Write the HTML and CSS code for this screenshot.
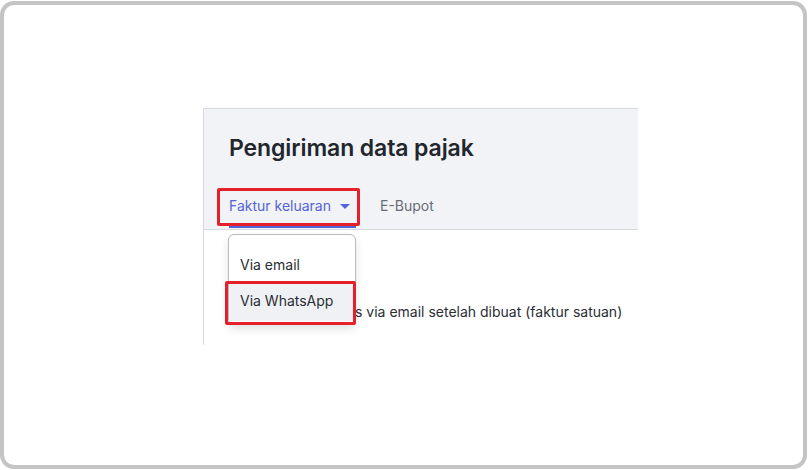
FILE: index.html
```html
<!DOCTYPE html>
<html>
<head>
<meta charset="utf-8">
<link rel="stylesheet" href="styles.css">
</head>
<body>
<div class="frame">
  <div class="panel">
    <div class="header">
      <h1 class="title">Pengiriman data pajak</h1>
      <div class="tabs">
        <div class="tab active">Faktur keluaran <span class="caret"></span></div>
        <div class="tab">E-Bupot</div>
      </div>
    </div>
    <div class="body">
      <p class="desc">Kirim faktur otomatis via email setelah dibuat (faktur satuan)</p>
    </div>
    <div class="menu">
      <div class="item">Via email</div>
      <div class="item hover">Via WhatsApp</div>
    </div>
    <div class="mark mark-tab"></div>
    <div class="mark mark-item"></div>
  </div>
</div>
</body>
</html>
```
FILE: styles.css
```css
* { box-sizing: border-box; }
html, body { margin: 0; padding: 0; background: #fff; }
body { font-family: Inter, "Noto Sans", sans-serif; color: #22262d; }
.frame {
  margin-top: 1px;
  width: 807px;
  height: 468px;
  border: 4px solid #c4c4c4;
  border-radius: 14px;
  padding: 103px 0 0 199px;
}
.panel {
  position: relative;
  width: 435px;
  height: 237px;
  border-top: 1px solid #d7dade;
  border-left: 1px solid #d7dade;
}
.header {
  background: #f2f3f7;
  border-bottom: 1px solid #d7dade;
  padding: 24px 0 0 25px;
  height: 121px;
}
.title {
  margin: 0;
  font-size: 23px;
  font-weight: 600;
  line-height: 30px;
  color: #22262d;
  letter-spacing: -0.1px;
}
.tabs {
  display: flex;
  gap: 24px;
  margin-top: 33px;
}
.tab {
  font-size: 14px;
  line-height: 20px;
  color: #686d76;
  padding-bottom: 12px;
  display: flex;
  align-items: center;
}
.tab.active {
  color: #5563d8;
  box-shadow: inset 0 -2px 0 #5563d8;
  padding-right: 6px;
}
.caret {
  display: inline-block;
  width: 0; height: 0;
  margin-left: 9px;
  border-left: 5px solid transparent;
  border-right: 5px solid transparent;
  border-top: 5px solid #5563d8;
}
.body { padding: 72px 0 0 21px; }
.desc {
  margin: 0;
  font-size: 14px;
  line-height: 20px;
  color: #2a2e35;
}
.menu {
  position: absolute;
  left: 24px;
  top: 125px;
  width: 128px;
  height: 91px;
  background: #fff;
  border: 1px solid #b9bdc4;
  border-radius: 6px;
  box-shadow: 0 4px 8px rgba(0,0,0,0.12);
  padding-top: 13px;
  overflow: hidden;
}
.item {
  font-size: 14px;
  line-height: 20px;
  padding: 7px 11px;
  color: #2a2e35;
}
.item.hover { background: #f0f1f5; padding: 9px 11px 10px; }
.mark {
  position: absolute;
  border: 3px solid #e4212b;
  border-radius: 2px;
}
.mark-tab { left: 13px; top: 79px; width: 143px; height: 38px; }
.mark-item { left: 21px; top: 172px; width: 131px; height: 44px; }
```
